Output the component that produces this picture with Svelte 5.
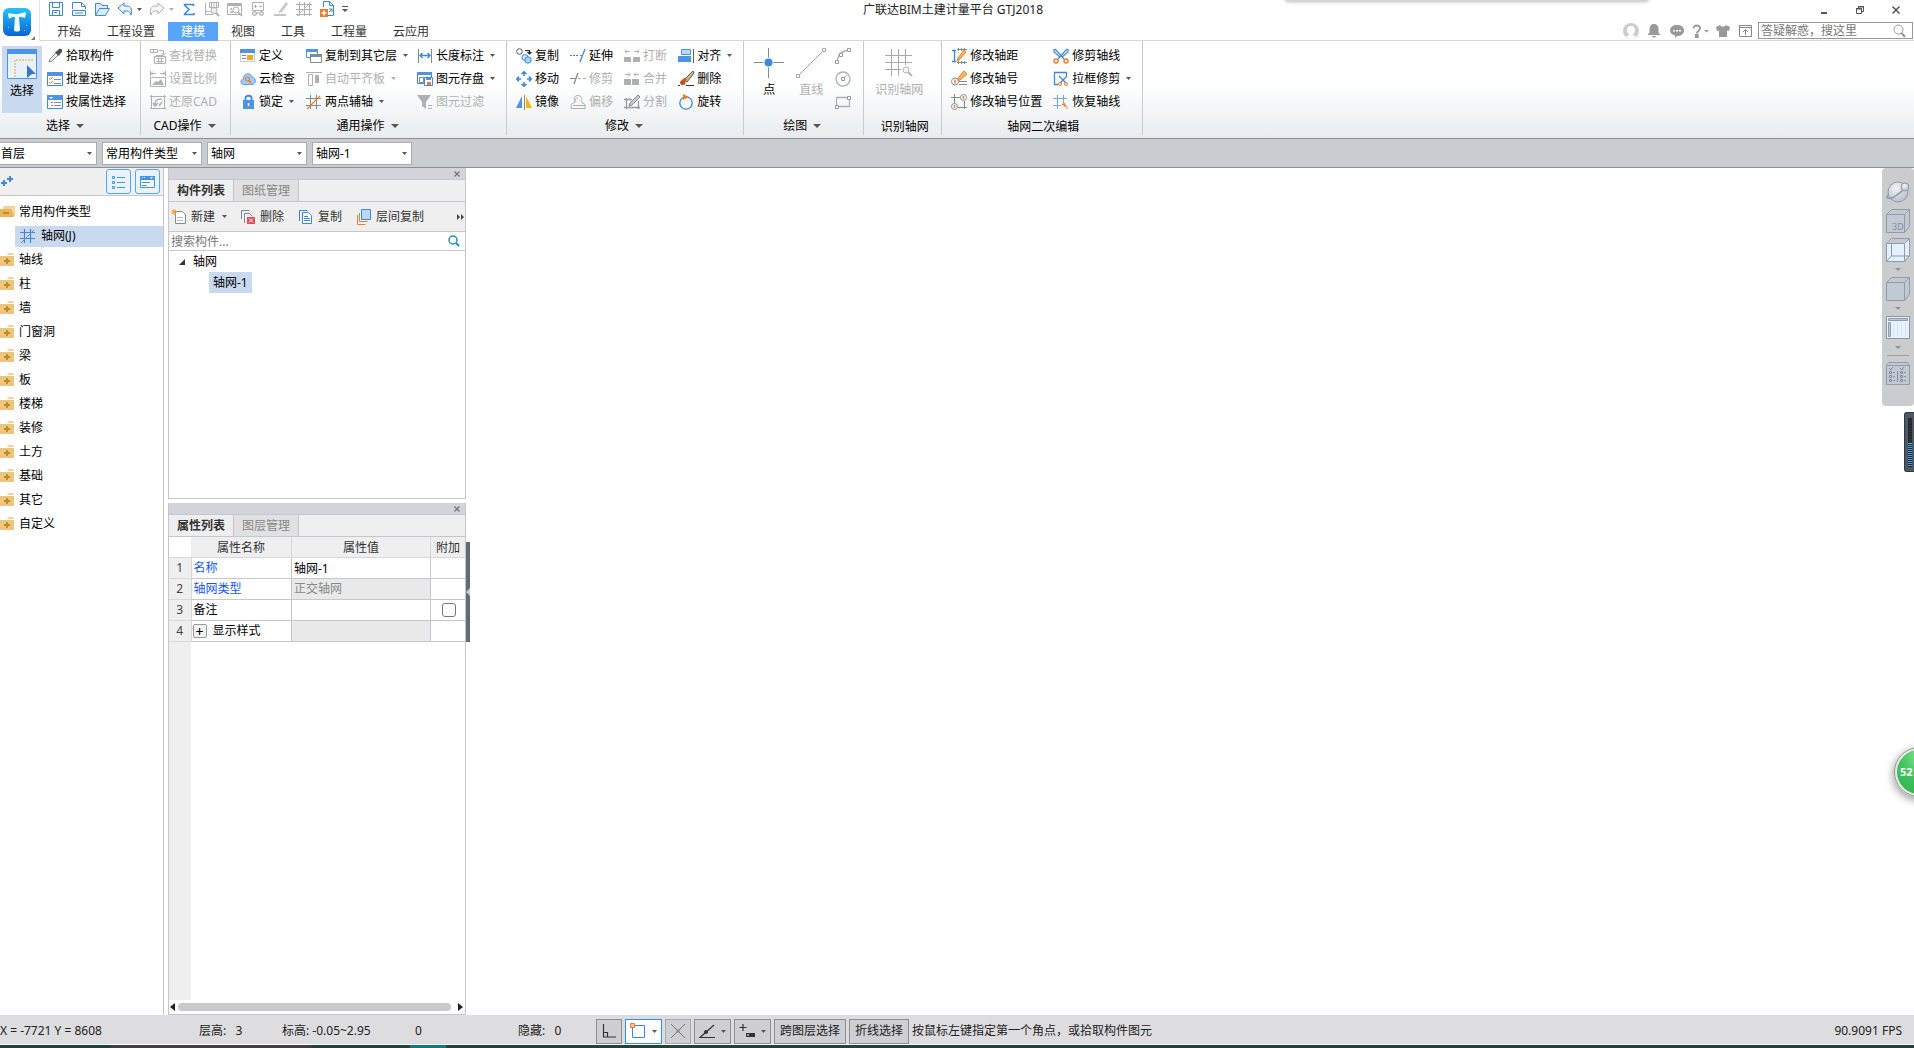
<script lang="ts">
  type Tool = { icon: string; label: string; off?: boolean; menu?: boolean };

  const B = "#3f87d9";
  const G = "#b0b0b0";
  const D = "#808c94";
  const O = "#ee7b2b";

  const icons: Record<string, string> = {
    // quick access
    save: `<path d="M1.5 1.5h13v13h-13zM4.5 1.5v5h7v-5M4.5 14.5v-5h7v5M6 11.5h3" fill="none" stroke="${B}"/>`,
    saveAs: `<path d="M1.5 8V1.5h9l4 4V8M10.5 1.5v4h4M1.5 9.5h13v5h-13zM4 12h8" fill="none" stroke="${B}"/>`,
    open: `<path d="M1.5 14V2.5h5l1.5 2h5.5v3M1.5 14.5l4-7h10l-4 7z" fill="#d9eafc" stroke="${B}"/>`,
    undo: `<path d="M1 7l6-5v3h3c4 0 5.5 4 4 9-1-3-2-4-4-4H7v3z" fill="#eaf3fd" stroke="${B}" stroke-linejoin="round"/>`,
    redo: `<path d="M15 7L9 2v3H6c-4 0-5.5 4-4 9 1-3 2-4 4-4h3v3z" fill="#f7f7f7" stroke="${G}" stroke-linejoin="round"/>`,
    sum: `<path d="M12.5 5V3.5h-9v.5L8 8.5 3.5 13v.5H13V12" fill="none" stroke="${B}" stroke-width="1.6"/>`,
    sheetFind: `<path d="M1.5 2v11.5h8M1.5 10.5h5M5.5 1.5h9v5h-9zM7.5 2v4M10 2v4M12.5 2v4" fill="none" stroke="${G}"/><circle cx="10" cy="9.5" r="3" fill="#eee" stroke="${G}"/><path d="M12 12l3 3" stroke="${G}" stroke-width="2"/>`,
    winFind: `<path d="M.5 2.5h14v11h-14z" fill="none" stroke="${G}"/><path d="M1 3h13v2H1z" fill="${G}"/><circle cx="9" cy="9" r="3" fill="#fff" stroke="${G}"/><path d="M11 11l4 4M3 8h2M3 11h3" stroke="${G}" stroke-width="1.5"/>`,
    sheetView: `<path d="M2.5 1.5h11v8h-11zM4 5.5h3M9 5.5h3M5.5 4v3" fill="none" stroke="${G}"/><circle cx="4.5" cy="12.5" r="2" fill="#ddd" stroke="${G}"/><circle cx="11.5" cy="12.5" r="2" fill="#ddd" stroke="${G}"/><path d="M6 12h4" stroke="${G}"/>`,
    pen: `<path d="M13 1L7 9l-2 3 4-1 6-8z" fill="#c8c8c8"/><path d="M1 14h12" stroke="${G}" stroke-width="1.5"/>`,
    net: `<path d="M3.5 1v14M8.5 1v14M13.5 1v14M0 3.5h16M0 8.5h16M0 13.5h16M1 15L14 2" fill="none" stroke="${G}"/>`,
    cad: `<path d="M4.5 6V.5h6l4 4v10H9M10.5.5v4h4" fill="none" stroke="${B}"/><path d="M1 8h8v8H1z" fill="${O}"/><path d="M5 9.5v5M2.5 12h5" stroke="#fff" stroke-width="1.5"/><path d="M10 11l3-3M13 11V8h-3" fill="none" stroke="${B}"/>`,
    // account row
    avatar: `<circle cx="8" cy="8" r="8" fill="#ccc"/><path d="M4 7a4 4 0 0 1 8 0c0 2-1 4-2 4v1c2 1 3 1 3 2a8 8 0 0 1-10 0c0-1 1-1 3-2v-1C5 11 4 9 4 7z" fill="#fff"/>`,
    bell: `<path d="M8 1c3 0 4.5 2 4.5 5v3.5l2 2.500h-13l2-2.500V6c0-3 1.500-5 4.500-5zM6 13h4c0 2-4 2-4 0z" fill="#999"/>`,
    chat: `<path d="M8 2c4 0 7 2 7 5.5S12 13 8 13l-2 2v-2.500C3 12 1 10 1 7.500 1 4 4 2 8 2z" fill="#999"/><path d="M4 7h2v1.5H4zM7 7h2v1.5H7zM10 7h2v1.5h-2z" fill="#fff"/>`,
    help: `<path d="M1.5 5.500c0-4 6.500-4 6.500 0 0 2-3.200 2.500-3.200 5M3.800 12h2v2h-2z" fill="none" stroke="#999" stroke-width="1.8"/><path d="M12 7h5l-2.500 2.500z" fill="#999"/>`,
    shirt: `<path d="M5 2c1 2 5 2 6 0l4 2-1 4-2-.5V14H4V7.500L2 8 1 4z" fill="#999"/>`,
    winUp: `<path d="M1.5 2.5h12v11h-12zM1.5 4.5h12M7.5 12V6.5M5 9l2.500-2.500L10 9" fill="none" stroke="#888"/>`,
    lens: `<circle cx="6.5" cy="6.5" r="4.5" fill="none" stroke="#999"/><path d="M9.5 10l3.500 4" stroke="#999" stroke-width="2"/>`,
    lensBlue: `<circle cx="7" cy="7" r="4" fill="none" stroke="#2a8bc4" stroke-width="1.5"/><path d="M10 10l3 3" stroke="#2a8bc4" stroke-width="2"/>`,
    // ribbon
    dropper: `<path d="M2 14l1-3 6-6 2 2-6 6z" fill="#eef4f8" stroke="#7b8790"/><path d="M8 4l2-1 2-2c2-1 4 1 3 3l-2 2-1 2z" fill="#455"/>`,
    batch: `<path d="M.5 2.5h15v12H.5z" fill="#fff" stroke="${B}"/><path d="M0 1h16v4H0z" fill="#4d94e2"/><path d="M2 7l1.500 1.500L6 6M2 11l1.500 1.500L6 10" fill="none" stroke="${O}"/><path d="M7 8.5h7M7 12.5h7" stroke="${D}"/>`,
    byProp: `<path d="M.5 2.5h15v12H.5z" fill="#fff" stroke="${B}"/><path d="M0 1h16v5H0z" fill="#4d94e2"/><path d="M2 3h4l-2 2z" fill="#fff"/><path d="M4 8.5h2M4 11.5h2M7 8.5h7M7 11.5h7" stroke="${D}"/>`,
    findRep: `<path d="M.5 1.5h7v3h-7zM3.5 1.5v3M9 2.5h4.5V6M11 5l2.500 2L16 5M4.5 8.5h11v7h-11zM6 7.5h7M6.5 10.5h7M6.5 13.5h7M8.5 10v5M11.5 10v5" fill="none" stroke="${G}"/>`,
    ratio: `<path d="M.5 5V0M15.5 5V0M1 2.5h5M10 2.5h5M3 .5l-2 2 2 2M13 .5l2 2-2 2M.5 6.5h15v9H.5z" fill="none" stroke="${G}"/><path d="M2 14l4-4 2 1 3-3 3 6z" fill="${G}"/>`,
    restore: `<path d="M1.5 1v14M14.5 1v14M0 2.5h16M0 14.5h16" stroke="${G}"/><path d="M5 12c0-5 1-7 7-7M3 9l2 3 3-3M9 12l3-4" fill="none" stroke="${G}" stroke-width="1.5"/>`,
    define: `<path d="M.5 2.5h14v11H.5z" fill="#fff" stroke="#c5ced6"/><path d="M0 1h15v4H0z" fill="#4d94e2"/><path d="M2 7.5h4M2 10.5h4" stroke="${D}"/><path d="M7 7h6v5H7z" fill="#f6a823"/>`,
    cloud: `<path d="M4 13.500c-4 0-4-5-.5-5.500C3 2 11 1 12 6c4 0 5 7 0 7.500z" fill="#a5cbf4" stroke="#5c9ee6"/><circle cx="7.5" cy="8" r="2" fill="none" stroke="${O}" stroke-width="1.2"/><path d="M9 9.5l2 2.500" stroke="${O}" stroke-width="1.5"/>`,
    lock: `<path d="M5.5 7V4c0-3 6-3 6 0v3" fill="none" stroke="${B}" stroke-width="1.8"/><path d="M3 6h11v9H3z" fill="#4d94e2"/><path d="M8.5 9v3" stroke="#fff" stroke-width="1.5"/>`,
    copyTo: `<path d="M.5 1.5h11v8H.5z" fill="#fff" stroke="#4d94e2"/><path d="M0 1h12v3H0z" fill="#4d94e2"/><path d="M4.5 6.5h11v8h-11z" fill="#fff" stroke="${D}"/><path d="M4 6h12v3H4z" fill="${D}"/>`,
    level: `<path d="M0 1.5h16M2.5 3.5h4v11h-4z" fill="none" stroke="${G}"/><path d="M9 4h4v8H9z" fill="${G}"/>`,
    aux: `<path d="M4.5 1v14M10.5 1v14M0 4.5h15M0 11.5h15" stroke="${D}"/><path d="M1 15L14 2" stroke="${O}" stroke-width="1.2"/>`,
    length: `<path d="M1.5 1v14M14.5 1v14" stroke="${D}"/><path d="M3 7.5h10M5.5 5L3 7.5 5.5 10M10.5 5L13 7.5 10.5 10" fill="none" stroke="${B}" stroke-width="1.4"/>`,
    store: `<path d="M.5 2.5h14v10H.5z" fill="#fff" stroke="${B}"/><path d="M0 1h15v3H0z" fill="#4d94e2"/><path d="M2.5 6.5h4v5h-4z" fill="none" stroke="${D}"/><path d="M7.5 6.5h8v8h-8z" fill="#fff" stroke="${B}"/><path d="M9 7h5v2H9z" fill="#4d94e2"/><path d="M10 11h4v3h-4z" fill="${O}"/>`,
    filter: `<path d="M0 1h14L9 8v7l-4-3V8z" fill="${G}"/><path d="M11 11.5h4M11 14.5h4" stroke="${G}"/>`,
    copy: `<circle cx="3.5" cy="3.5" r="2.8" fill="#fff" stroke="#555"/><path d="M9 2.5h4.5V5M11.5 4l2 2 2-2" fill="none" stroke="#222" stroke-width="1.2"/><circle cx="9" cy="9.5" r="3" fill="#d8ebfd" stroke="${B}"/><circle cx="12" cy="12" r="3.2" fill="#a8d4f8" stroke="${B}"/>`,
    extend: `<path d="M0 7.5h9" stroke="${B}" stroke-dasharray="2 1"/><path d="M15 1L10 14" stroke="${B}" stroke-width="1.3"/><path d="M10 7.5h3" stroke="${D}"/>`,
    brk: `<path d="M1 3.5h5M3 1.5l-2 2 2 2M10 3.5h5M13 1.5l2 2-2 2" fill="none" stroke="${G}"/><path d="M0 9h7v5H0zM9 9h7v5H9z" fill="${G}"/>`,
    align: `<path d="M3.5 1.5h9v5h-9z" fill="#b9d8f8" stroke="#4d94e2"/><path d="M0 8h13v6H0z" fill="#4d94e2"/><path d="M15.5 1v14" stroke="#666"/>`,
    move: `<path d="M8 1v4M8 11v4M1 8h4M11 8h4M5.5 3L8 .8 10.5 3M5.5 13L8 15.200 10.5 13M3 5.5L.8 8 3 10.5M13 5.5L15.200 8 13 10.5" fill="none" stroke="${B}" stroke-width="1.6"/>`,
    trim: `<path d="M0 7.5h6" stroke="#888"/><path d="M8 2L4 13" stroke="#888" stroke-width="1.3"/><path d="M8 7.5h8" stroke="${G}" stroke-dasharray="3 2"/>`,
    merge: `<path d="M1 3.5h5M4 1.5l2 2-2 2M10 3.5h5M12 1.5l-2 2 2 2" fill="none" stroke="${G}"/><path d="M0 8h7v6H0zM8 8h7v6H8z" fill="${G}"/>`,
    erase: `<path d="M15 0l1 2-7 9-3-2z" fill="#d9b98a" stroke="#555"/><path d="M9 8L5 14c-2 0-3-1-3-3l4-4z" fill="#b5651d"/><circle cx="5" cy="11.5" r="2.5" fill="#d44a1c"/><path d="M0 14.5h2M8 14.5h8" stroke="#333"/>`,
    mirror: `<path d="M6 2v12H0z" fill="#4d94e2"/><path d="M8.5 1v15" stroke="#888"/><path d="M10 2v12h6z" fill="#f9b41c"/>`,
    offset: `<path d="M1 14.5h14V11c0-2-4-2-4-3 2-3 0-6.500-3-6.500S3 4 5 8c0 1-4 1-4 3z" fill="none" stroke="${G}"/><path d="M3 11.5h12M6 8c-1-2-1-4 2-4" fill="none" stroke="${G}"/>`,
    split: `<path d="M0 5.5h8M2.5 4v11M0 13.5h16M14.5 7v8" stroke="#999" stroke-width="1.3"/><path d="M14 1l2 2-8 8-3 1 1-3z" fill="#ccc" stroke="#888"/>`,
    rotate: `<circle cx="8" cy="9" r="6.2" fill="none" stroke="${B}" stroke-width="1.3"/><path d="M5 0l6 3-6 3z" fill="${O}"/>`,
    arc: `<path d="M2 13C3 7 6 3 13 2" fill="none" stroke="${G}" stroke-width="1.3"/><path d="M.5 12.5h3v3h-3zM4.5 5.5h3v3h-3zM12.5.5h3v3h-3z" fill="#fff" stroke="#999"/>`,
    circle: `<circle cx="8" cy="8" r="7" fill="none" stroke="${G}" stroke-width="1.3"/><path d="M8 8l4-4" stroke="${G}"/><path d="M6.5 6.5h3v3h-3z" fill="#fff" stroke="#999"/>`,
    rect: `<path d="M1.5 3.5h13v9h-13z" fill="none" stroke="${G}" stroke-width="1.3"/><path d="M.5 11.5h3v3h-3zM12.5 2.5h3v3h-3z" fill="#fff" stroke="#999"/>`,
    axisGap: `<path d="M3.5 2v12M1 2.5h4M1 13.5h4" stroke="${B}" stroke-width="1.3"/><path d="M6 1.5h10M6 14.5h10M7.5 0v3M10.5 0v3M13.5 0v3M7.5 13v3M10.5 13v3M13.5 13v3" stroke="${D}"/><path d="M13 2l2 2-7 8-2 1 1-3z" fill="#f9b85a" stroke="${O}"/>`,
    axisNo: `<circle cx="4" cy="10.5" r="3.5" fill="#fff" stroke="${D}"/><path d="M4 8.5v4" stroke="${O}" stroke-width="1.5"/><path d="M8 10.5h8M8 13.5h8" stroke="${D}"/><path d="M13 0l3 3-7 6-2 .5.5-3z" fill="#f9b85a" stroke="${O}"/>`,
    axisPos: `<path d="M3.5 0v9M0 3.5h9M13.5 7v8M7 13.5h9" stroke="${D}"/><circle cx="12.5" cy="3.5" r="3" fill="#fff" stroke="${D}"/><circle cx="3.5" cy="12.5" r="3" fill="#fff" stroke="${D}"/><path d="M12.5 2v3M3.5 11v3" stroke="${O}" stroke-width="1.5"/>`,
    cutAxis: `<path d="M2 1l9 10M14 1L5 11M1 1v3l6 5M15 1v3L9 9" fill="none" stroke="${B}" stroke-width="1.2"/><circle cx="3" cy="13" r="2" fill="none" stroke="${O}" stroke-width="1.5"/><circle cx="13" cy="13" r="2" fill="none" stroke="${O}" stroke-width="1.5"/>`,
    cutBox: `<path d="M5 13.5H1.5v-12h12V5" fill="none" stroke="${B}" stroke-width="1.3"/><path d="M6 5l7 7M14 5l-7 7" stroke="${B}" stroke-width="1.3"/><circle cx="7" cy="13" r="1.5" fill="none" stroke="${O}"/><circle cx="13" cy="13" r="1.5" fill="none" stroke="${O}"/>`,
    backAxis: `<path d="M4.5 1v14M10.5 1v8M0 4.5h14M0 11.5h8" stroke="#7ba6d6"/><path d="M8 10l4-1 1 4z" fill="${O}"/><path d="M11 12c3-1 3 1 3 3" fill="none" stroke="${O}"/>`,
    // panels
    plus: `<path d="M10 2v6M7 5h6M4 6v6M1 9h6" stroke="${B}" stroke-width="2"/>`,
    list: `<path d="M1.5 2.5h2v2h-2zM1.5 7.5h2v2h-2zM1.5 12.5h2v2h-2zM6 3.5h8M6 8.5h8M6 13.5h8" fill="none" stroke="#3f96ea"/>`,
    card: `<path d="M.5 2.5h14v11H.5z" fill="#fff" stroke="#3f96ea"/><path d="M0 2h15v4H0z" fill="#3f96ea"/><path d="M2 3.5h4" stroke="#fff" stroke-dasharray="1 1"/><path d="M10 3h3l-1.500 2z" fill="#fff"/><path d="M2 8.5h8M2 11.5h5" stroke="#3f96ea"/>`,
    folderOpen: `<path d="M3 2h12v10h-2V5H3z" fill="#f2d49b"/><path d="M0 5h12l2 8H0z" fill="#e9b45c"/><path d="M3 9h6" stroke="#b97d1e" stroke-width="1.5"/>`,
    folder: `<path d="M8 1h5l1 2H7z" fill="#f2d49b"/><path d="M0 4h14v10H0z" fill="#edc57d"/><path d="M7 6v6M4 9h6" stroke="#c08527" stroke-width="1.8"/>`,
    axis: `<path d="M4.5 1v14M10.5 1v14M0 4.5h15M0 10.5h15" stroke="${B}" stroke-width="1.2"/><path d="M1 15L14 2" stroke="#888"/>`,
    create: `<path d="M4.5 2.5h7l3 3v9h-10z" fill="#fff" stroke="${D}"/><path d="M6 8.5h6M6 11.5h6" stroke="#bbb"/><path d="M1 1l4 4M5 1L1 5M3 0v6M0 3h6" stroke="#f59a23"/>`,
    remove: `<path d="M1.5 10V1.5h8M4.5 14V4.5h5l3 3" fill="none" stroke="${D}"/><path d="M7 8h8v7H7z" fill="#d9505a"/><path d="M9 9.5l4 4M13 9.5l-4 4" stroke="#fff"/>`,
    docs: `<path d="M1.5 12V1.5h8" fill="none" stroke="${B}"/><path d="M4.5 3.5h6l3 3v8h-9z" fill="#fff" stroke="${B}"/><path d="M6 7.5h4M6 9.5h6M6 11.5h6" stroke="${B}"/>`,
    layers: `<path d="M1.5 6v9.5h8M3.5 4v8.5h8" fill="none" stroke="${O}"/><path d="M5.5.5h9v10h-9z" fill="#b9d8fb" stroke="${B}"/>`,
    // status bar
    ortho: `<path d="M2.5 1v13H15M2.5 9.5h4v4" fill="none" stroke="#333" stroke-width="1.2"/>`,
    snapRect: `<path d="M2.5 2.5h12v12h-12z" fill="#fff" stroke="${B}"/><path d="M.5.5h4v4h-4z" fill="#f9c79a" stroke="${O}"/>`,
    snapX: `<path d="M1 1l14 14M15 1L1 15" stroke="#777"/><path d="M6.5 6.5h3v3h-3z" fill="#888"/>`,
    angle: `<path d="M15 2L1 14.5h15" fill="none" stroke="#333" stroke-width="1.2"/><circle cx="7" cy="9" r="2" fill="#333"/>`,
    dyn: `<path d="M4 1v7M.5 4.5h7" stroke="#333" stroke-width="1.2"/><path d="M7 10h9v4H7z" fill="#333"/><path d="M8 12h2" stroke="#fff"/>`,
  };

  const quick = ["save", "saveAs", "open", "undo", "redo", "sum", "sheetFind", "winFind", "sheetView", "pen", "net", "cad"];
  const tabs = ["开始", "工程设置", "建模", "视图", "工具", "工程量", "云应用"];
  let active = $state("建模");

  const pickTools: Tool[] = [
    { icon: "dropper", label: "拾取构件" },
    { icon: "batch", label: "批量选择" },
    { icon: "byProp", label: "按属性选择" },
  ];
  const cadTools: Tool[] = [
    { icon: "findRep", label: "查找替换", off: true },
    { icon: "ratio", label: "设置比例", off: true },
    { icon: "restore", label: "还原CAD", off: true },
  ];
  const commonTools: Tool[][] = [
    [
      { icon: "define", label: "定义" },
      { icon: "cloud", label: "云检查" },
      { icon: "lock", label: "锁定", menu: true },
    ],
    [
      { icon: "copyTo", label: "复制到其它层", menu: true },
      { icon: "level", label: "自动平齐板", off: true, menu: true },
      { icon: "aux", label: "两点辅轴", menu: true },
    ],
    [
      { icon: "length", label: "长度标注", menu: true },
      { icon: "store", label: "图元存盘", menu: true },
      { icon: "filter", label: "图元过滤", off: true },
    ],
  ];
  const editTools: Tool[][] = [
    [
      { icon: "copy", label: "复制" },
      { icon: "move", label: "移动" },
      { icon: "mirror", label: "镜像" },
    ],
    [
      { icon: "extend", label: "延伸" },
      { icon: "trim", label: "修剪", off: true },
      { icon: "offset", label: "偏移", off: true },
    ],
    [
      { icon: "brk", label: "打断", off: true },
      { icon: "merge", label: "合并", off: true },
      { icon: "split", label: "分割", off: true },
    ],
    [
      { icon: "align", label: "对齐", menu: true },
      { icon: "erase", label: "删除" },
      { icon: "rotate", label: "旋转" },
    ],
  ];
  const axisTools: Tool[][] = [
    [
      { icon: "axisGap", label: "修改轴距" },
      { icon: "axisNo", label: "修改轴号" },
      { icon: "axisPos", label: "修改轴号位置" },
    ],
    [
      { icon: "cutAxis", label: "修剪轴线" },
      { icon: "cutBox", label: "拉框修剪", menu: true },
      { icon: "backAxis", label: "恢复轴线" },
    ],
  ];

  const combos = [
    { name: "楼层", value: "首层" },
    { name: "构件分类", value: "常用构件类型" },
    { name: "构件类型", value: "轴网" },
    { name: "构件", value: "轴网-1" },
  ];
  const folders = ["轴线", "柱", "墙", "门窗洞", "梁", "板", "楼梯", "装修", "土方", "基础", "其它", "自定义"];
</script>

{#snippet icon(name: string)}
  <svg class="icon" width="16" height="16" viewBox="0 0 16 16" aria-hidden="true">{@html icons[name]}</svg>
{/snippet}

{#snippet caret()}
  <svg class="caret" width="5" height="3" viewBox="0 0 5 3" aria-hidden="true"><path d="M0 0h5L2.5 3z" fill="currentColor" /></svg>
{/snippet}

{#snippet column(tools: Tool[])}
  <div class="col">
    {#each tools as tool}
      <button class="tool" disabled={tool.off}>
        {@render icon(tool.icon)}<span>{tool.label}</span>
        {#if tool.menu}{@render caret()}{/if}
      </button>
    {/each}
  </div>
{/snippet}

{#snippet groupName(text: string)}
  <button class="group-name">
    {text}
    <svg width="8" height="4" viewBox="0 0 8 4" aria-hidden="true"><path d="M0 0h8L4 4z" fill="#555" /></svg>
  </button>
{/snippet}

{#snippet panelHead(first: string, second: string)}
  <div class="panel-bar"><button aria-label="关闭"><svg width="6" height="6" viewBox="0 0 6 6"><path d="M.5.5l5 5M5.5.5l-5 5" stroke="#777" stroke-width="1.3" /></svg></button></div>
  <div class="panel-tabs">
    <button class="on">{first}</button>
    <button>{second}</button>
  </div>
{/snippet}

<div class="app">
  <header>
    <button class="logo" aria-label="主菜单">
      <svg width="37" height="36" viewBox="0 0 37 36">
        <defs>
          <linearGradient id="logo" x1="0" y1="0" x2="0" y2="1">
            <stop offset="0" stop-color="#25c3fa" />
            <stop offset="1" stop-color="#0b62d4" />
          </linearGradient>
        </defs>
        <rect x="3" y="3" width="28" height="28" rx="6" fill="url(#logo)" />
        <path d="M8 9l1-1c5 2 11 1 16-1l1 1-1 5c-2-1-4-1-6-1l1 13c0 2-6 2-6 0l1-13c-2 0-4 0-6 2z" fill="#f2fbff" />
        <path d="M8 22l1 1M26 20l1 1M24 25l1 1" stroke="#8ee0ff" />
        <path d="M35 31v4h-4z" fill="#777" />
      </svg>
    </button>
    <div class="head-main">
      <div class="title-row">
        <div class="quick">
          {#each quick as name}
            <button aria-label={name}>{@render icon(name)}</button>
            {#if name === "undo"}<span class="mini">{@render caret()}</span>{/if}
            {#if name === "redo"}<span class="mini off">{@render caret()}</span>{/if}
          {/each}
          <button aria-label="自定义快速访问"><svg width="6" height="7" viewBox="0 0 6 7"><path d="M0 .5h6" stroke="#555" /><path d="M0 3h6L3 6z" fill="#555" /></svg></button>
        </div>
        <h1>广联达BIM土建计量平台 GTJ2018</h1>
        <div class="window">
          <button aria-label="最小化"><svg width="10" height="10" viewBox="0 0 10 10"><path d="M2 8h6" stroke="#555" stroke-width="2" /></svg></button>
          <button aria-label="还原"><svg width="10" height="10" viewBox="0 0 10 10"><path d="M3.5 3V1.5h5v5H7M1.5 3.5h5v5h-5z" fill="none" stroke="#555" /><path d="M3 1h6v1.5H3zM1 3h6v1.5H1z" fill="#555" /></svg></button>
          <button aria-label="关闭"><svg width="10" height="10" viewBox="0 0 10 10"><path d="M1.5 1.5l7 7M8.5 1.5l-7 7" stroke="#555" stroke-width="1.5" /></svg></button>
        </div>
      </div>
      <nav>
        {#each tabs as tab}
          <button class:active={tab === active} onclick={() => (active = tab)}>{tab}</button>
        {/each}
        <div class="account">
          {#each ["avatar", "bell", "chat", "help", "shirt", "winUp"] as name}
            <button aria-label={name}>{@render icon(name)}</button>
          {/each}
          <label class="search">
            <input aria-label="搜索帮助" placeholder="答疑解惑，搜这里" />
            {@render icon("lens")}
          </label>
        </div>
      </nav>
    </div>
  </header>

  <section class="ribbon">
    <div class="group first">
      <div class="tools">
        <button class="big selected">
          <svg width="30" height="30" viewBox="0 0 30 30" aria-hidden="true">
            <path d="M.5.5h29v29H.5z" fill="#e8f1fc" stroke="#4d94e2" />
            <path d="M0 0h30v5H0z" fill="#4d94e2" />
            <path d="M8 28V11h19" fill="none" stroke="#f5a623" stroke-dasharray="2 1" />
            <path d="M20 16l9 9h-4l-5 4z" fill="#3777c4" />
          </svg>
          选择
        </button>
        {@render column(pickTools)}
      </div>
      {@render groupName("选择")}
    </div>

    <div class="group">
      <div class="tools">{@render column(cadTools)}</div>
      {@render groupName("CAD操作")}
    </div>

    <div class="group">
      <div class="tools">
        {#each commonTools as tools}{@render column(tools)}{/each}
      </div>
      {@render groupName("通用操作")}
    </div>

    <div class="group">
      <div class="tools">
        {#each editTools as tools}{@render column(tools)}{/each}
      </div>
      {@render groupName("修改")}
    </div>

    <div class="group draw">
      <div class="tools">
        <button class="big">
          <svg width="30" height="30" viewBox="0 0 30 30" aria-hidden="true">
            <path d="M14.5 0v30M0 14.5h30" stroke="#7d8d92" />
            <circle cx="14.5" cy="14.5" r="5" fill="#fff" />
            <circle cx="14.5" cy="14.5" r="4" fill="#3f87d9" />
          </svg>
          点
        </button>
        <button class="big" disabled>
          <svg width="30" height="30" viewBox="0 0 30 30" aria-hidden="true">
            <path d="M2 28L28 2" stroke="#a8a8a8" />
            <path d="M.5 26.5h3v3h-3zM26.5.5h3v3h-3z" fill="#fff" stroke="#a8a8a8" />
          </svg>
          直线
        </button>
        <div class="col">
          <button class="tool" aria-label="弧" disabled>{@render icon("arc")}</button>
          <button class="tool" aria-label="圆" disabled>{@render icon("circle")}</button>
          <button class="tool" aria-label="矩形" disabled>{@render icon("rect")}</button>
        </div>
      </div>
      {@render groupName("绘图")}
    </div>

    <div class="group recognize">
      <div class="tools">
        <button class="big" disabled>
          <svg width="30" height="30" viewBox="0 0 30 30" aria-hidden="true">
            <path d="M7.5 1v27M14.5 1v27M21.5 1v16M1 7.5h27M1 14.5h27M1 21.5h16" stroke="#a8a8a8" />
            <circle cx="22" cy="22" r="3" fill="#f4f4f4" stroke="#b4b4b4" />
            <path d="M24 24l4 4" stroke="#b4b4b4" stroke-width="2" />
          </svg>
          识别轴网
        </button>
      </div>
      <div class="group-name plain">识别轴网</div>
    </div>

    <div class="group">
      <div class="tools">
        {#each axisTools as tools}{@render column(tools)}{/each}
      </div>
      <div class="group-name plain">轴网二次编辑</div>
    </div>
  </section>

  <div class="combos">
    {#each combos as combo}
      <label class="combo">
        <select aria-label={combo.name}><option>{combo.value}</option></select>
        {@render caret()}
      </label>
    {/each}
  </div>

  <main>
    <aside>
      <div class="aside-bar">
        {@render icon("plus")}
        <button aria-label="列表视图">{@render icon("list")}</button>
        <button aria-label="卡片视图">{@render icon("card")}</button>
      </div>
      <ul class="types">
        <li><button>{@render icon("folderOpen")}常用构件类型</button></li>
        <li><button class="current">{@render icon("axis")}轴网(J)</button></li>
        {#each folders as folder}
          <li><button>{@render icon("folder")}{folder}</button></li>
        {/each}
      </ul>
    </aside>

    <div class="panels">
      <section class="panel">
        {@render panelHead("构件列表", "图纸管理")}
        <div class="panel-tools">
          <button>{@render icon("create")}新建{@render caret()}</button>
          <button>{@render icon("remove")}删除</button>
          <button>{@render icon("docs")}复制</button>
          <button>{@render icon("layers")}层间复制</button>
          <button class="more" aria-label="更多"><svg width="7" height="6" viewBox="0 0 7 6"><path d="M0 0l3 3-3 3zM4 0l3 3-3 3z" fill="#444" /></svg></button>
        </div>
        <label class="find">
          <input aria-label="搜索构件" placeholder="搜索构件..." />
          {@render icon("lensBlue")}
        </label>
        <div class="tree">
          <div class="node"><svg width="6" height="6" viewBox="0 0 6 6"><path d="M6 0v6H0z" fill="#333" /></svg>轴网</div>
          <button class="leaf">轴网-1</button>
        </div>
      </section>

      <section class="panel">
        {@render panelHead("属性列表", "图层管理")}
        <div class="grid-area">
          <table>
            <thead>
              <tr><th class="num"></th><th class="name">属性名称</th><th>属性值</th><th class="extra">附加</th></tr>
            </thead>
            <tbody>
              <tr><td class="num">1</td><td class="link">名称</td><td><input aria-label="名称" value="轴网-1" /></td><td></td></tr>
              <tr><td class="num">2</td><td class="link">轴网类型</td><td class="fixed">正交轴网</td><td></td></tr>
              <tr><td class="num">3</td><td>备注</td><td><input aria-label="备注" /></td><td class="check"><input type="checkbox" aria-label="附加备注" /></td></tr>
              <tr><td class="num">4</td><td><div class="expand"><button aria-label="展开">+</button>显示样式</div></td><td class="fixed"></td><td></td></tr>
            </tbody>
          </table>
        </div>
        <div class="scroll">
          <svg width="5" height="8" viewBox="0 0 5 8"><path d="M5 0v8L0 4z" fill="#222" /></svg>
          <div class="thumb"></div>
          <svg width="5" height="8" viewBox="0 0 5 8"><path d="M0 0v8l5-4z" fill="#222" /></svg>
        </div>
        <button class="handle" aria-label="收起"><svg width="4" height="8" viewBox="0 0 4 8"><path d="M4 0v8L0 4z" fill="#c5ccd2" /></svg></button>
      </section>
    </div>

    <section class="canvas">
      <div class="palette">
        <button aria-label="动态观察">
          <svg width="24" height="24" viewBox="0 0 24 24">
            <defs>
              <radialGradient id="ball" cx=".4" cy=".3" r=".7">
                <stop offset="0" stop-color="#f2f5f9" />
                <stop offset="1" stop-color="#b6c0cd" />
              </radialGradient>
            </defs>
            <circle cx="12" cy="12" r="10" fill="url(#ball)" stroke="#929ba6" />
            <path d="M2 15c-3 4 2 4 6 2C14 13 19 9 21 6" fill="none" stroke="#929ba6" stroke-width="1.5" />
            <circle cx="19" cy="7" r="4" fill="url(#ball)" stroke="#929ba6" />
          </svg>
        </button>
        <button aria-label="三维">
          <svg width="24" height="24" viewBox="0 0 24 24">
            <path d="M.5 5.5l5-5h18v17l-5 6H.5z" fill="#c0c9d4" stroke="#929ba6" />
            <path d="M.5 5.5h18v18M18.5 5.5l5-5" fill="none" stroke="#929ba6" />
            <text x="6" y="21" font-size="9" fill="#858f9b">3D</text>
          </svg>
        </button>
        <button aria-label="俯视">
          <svg width="24" height="24" viewBox="0 0 24 24">
            <path d="M.5 5.5l5-5h18v17l-5 6H.5z" fill="#e3f0fe" stroke="#929ba6" />
            <path d="M1 5l5-4h17l-5 4z" fill="#c0c9d4" />
            <path d="M.5 5.5h18v18M18.5 5.5l5-5M5.5 6v12M.5 23.5l5-5.5h18" fill="none" stroke="#929ba6" />
          </svg>
          <svg class="down" width="6" height="3" viewBox="0 0 6 3"><path d="M0 0h6L3 3z" fill="#8a929b" /></svg>
        </button>
        <button aria-label="实体显示">
          <svg width="24" height="24" viewBox="0 0 24 24">
            <path d="M.5 5.5l5-5h18v17l-5 6H.5z" fill="#c0c9d4" stroke="#929ba6" />
            <path d="M.5 5.5h18v18M18.5 5.5l5-5" fill="none" stroke="#929ba6" />
          </svg>
          <svg class="down" width="6" height="3" viewBox="0 0 6 3"><path d="M0 0h6L3 3z" fill="#8a929b" /></svg>
        </button>
        <button aria-label="视图布局">
          <svg width="24" height="24" viewBox="0 0 24 24">
            <path d="M.5.5h23v22H.5z" fill="#e6f2ff" stroke="#8d969f" />
            <path d="M2.5 2.5h19v2h-19zM2.5 6.5h2v14h-2z" fill="#bfc7d0" stroke="#929ba6" />
            <path d="M7.5 7v13M11.5 7v13M15.5 7v13M19.5 7v13" stroke="#d6e6f7" />
          </svg>
          <svg class="down" width="6" height="3" viewBox="0 0 6 3"><path d="M0 0h6L3 3z" fill="#8a929b" /></svg>
        </button>
        <hr />
        <button aria-label="显示设置">
          <svg width="24" height="24" viewBox="0 0 24 24">
            <path d="M.5 3.5l2-3h19l2 3v19H.5zM.5 3.5h23" fill="#c0c9d4" stroke="#929ba6" />
            <path d="M3 6l2 2 2-3M14 6l2 2 2-3M3.5 9.5h2v2h-2zM3.5 13.5h2v2h-2zM3.5 17.5h2v2h-2zM14.5 9.5h2v2h-2zM14.5 13.5h2v2h-2zM14.5 17.5h2v2h-2zM7 10.5h2M7 14.5h2M7 18.5h2M18 10.5h2M18 14.5h2M18 18.5h2M11.5 9v11" fill="none" stroke="#858f9b" />
          </svg>
        </button>
      </div>
      <div class="meter"><i></i></div>
      <div class="badge">52</div>
    </section>
  </main>

  <footer>
    <span class="coords">X = -7721 Y = 8608</span>
    <span class="height">层高:&nbsp;&nbsp; 3</span>
    <span class="level">标高: -0.05~2.95</span>
    <span class="zero">0</span>
    <span class="hidden-count">隐藏:&nbsp;&nbsp; 0</span>
    <button aria-label="正交">{@render icon("ortho")}</button>
    <button class="on" aria-label="矩形捕捉">{@render icon("snapRect")}{@render caret()}</button>
    <button class="dim" aria-label="交点">{@render icon("snapX")}</button>
    <button aria-label="角度">{@render icon("angle")}{@render caret()}</button>
    <button aria-label="动态输入">{@render icon("dyn")}{@render caret()}</button>
    <button class="text">跨图层选择</button>
    <button class="text">折线选择</button>
    <span>按鼠标左键指定第一个角点，或拾取构件图元</span>
    <span class="fps">90.9091 FPS</span>
  </footer>
  <div class="desktop"><i class="wide"></i><i class="teal"></i></div>
  <div class="edge"></div>
</div>

<style>
  :global(body) {
    margin: 0;
  }

  .app {
    display: flex;
    flex-direction: column;
    min-height: 100vh;
    position: relative;
    overflow: hidden;
    font: 12px/16px "Noto Sans", "Noto Sans CJK SC", sans-serif;
    color: #000;
    background: #fff;
  }

  button,
  input,
  select {
    font: inherit;
    color: inherit;
    border: 0;
    padding: 0;
    margin: 0;
    background: none;
    border-radius: 0;
    white-space: nowrap;
  }

  input {
    outline: none;
    min-width: 0;
  }

  input::placeholder {
    color: #777;
    opacity: 1;
  }

  svg {
    flex: none;
    display: block;
    overflow: visible;
  }

  .caret {
    color: #555;
  }

  /* header */
  header {
    display: flex;
  }

  .logo {
    width: 40px;
    box-sizing: border-box;
    padding-top: 4px;
    border-right: 1px solid #e4e4e4;
  }

  .head-main {
    flex: 1;
  }

  .title-row {
    display: grid;
    grid-template-columns: 1fr auto 1fr;
    height: 22px;
    align-items: center;
  }

  .quick {
    display: flex;
    align-items: center;
    gap: 7px;
    padding-left: 8px;
    padding-bottom: 4px;
  }

  .mini {
    margin-left: -3px;
  }

  .off .caret {
    color: #b0b0b0;
  }

  h1 {
    font: inherit;
    margin: 0 48px 2px 0;
    color: #222;
  }

  .window {
    display: flex;
    justify-content: flex-end;
    padding-bottom: 2px;
  }

  .window button {
    width: 36px;
    display: flex;
    justify-content: center;
  }

  nav {
    display: flex;
    height: 19px;
    box-sizing: border-box;
    padding-left: 4px;
    border-bottom: 1px solid #d8d8d8;
  }

  nav > button {
    padding: 0 13px;
    height: 19px;
    color: #333;
  }

  nav > button.active {
    background: #58a4f8;
    color: #fff;
  }

  .account {
    display: flex;
    gap: 7px;
    margin-left: auto;
    padding-right: 1px;
  }

  .search {
    display: flex;
    align-items: center;
    justify-content: space-between;
    box-sizing: border-box;
    width: 155px;
    height: 17px;
    margin-left: -3px;
    padding: 0 4px 0 2px;
    border: 1px solid #999;
  }

  .search input {
    width: 120px;
    height: 15px;
  }

  /* ribbon */
  .ribbon {
    display: flex;
    height: 97px;
    background: linear-gradient(#fff 45%, #e8ecee);
    border-bottom: 1px solid #8d9094;
  }

  .group {
    display: flex;
    flex-direction: column;
    padding: 3px 11px 0 9px;
    margin-bottom: 3px;
    border-right: 1px solid #c9cccf;
  }

  .group.first {
    padding: 3px 12px 0 2px;
  }

  .group.draw {
    padding: 3px 10px 0 7px;
  }

  .group.recognize {
    padding: 3px 16px 0 11px;
  }

  .tools {
    display: flex;
    gap: 11px;
    height: 69px;
    padding-right: 2px;
  }

  .first .tools {
    gap: 5px;
  }

  .draw .tools {
    gap: 6px;
  }

  .col {
    display: flex;
    flex-direction: column;
    align-items: flex-start;
  }

  .tool {
    display: flex;
    align-items: center;
    height: 23px;
    gap: 3px;
  }

  .tool .caret {
    margin: 0 -2px 0 3px;
  }

  button:disabled,
  button:disabled .caret {
    color: #b0b0b0;
  }

  .big {
    display: flex;
    flex-direction: column;
    align-items: center;
    gap: 4px;
    min-width: 36px;
    padding: 4px 0;
  }

  .big.selected {
    width: 40px;
    padding: 3px 0;
    margin-top: 2px;
    background: #c9d9f0;
  }

  .group-name {
    display: flex;
    align-items: center;
    justify-content: center;
    gap: 6px;
    height: 22px;
    padding-top: 3px;
  }

  .group-name.plain {
    height: 16px;
    padding: 6px 0 0 4px;
  }

  .recognize .group-name {
    margin: 0 -14px 0 -9px;
  }

  /* combo bar */
  .combos {
    display: flex;
    gap: 5px;
    height: 29px;
    box-sizing: border-box;
    padding-top: 3px;
    background: #c9ccd1;
    border-bottom: 1px solid #8d9094;
  }

  .combo {
    display: grid;
    width: 100px;
    height: 23px;
    box-sizing: border-box;
    border: 1px solid #a9abae;
    background: #fff;
    align-items: center;
  }

  .combo:first-child {
    width: 97px;
    border-left: 0;
  }

  .combo > :global(*) {
    grid-area: 1 / 1;
  }

  .combo select {
    appearance: none;
    width: 100%;
    height: 21px;
    padding-left: 3px;
  }

  .combo:first-child select {
    padding-left: 1px;
  }

  .combo .caret {
    justify-self: end;
    margin-right: 4px;
    pointer-events: none;
  }

  /* left tree */
  main {
    flex: 1;
    display: flex;
  }

  aside {
    width: 163px;
    border-right: 1px solid #c6c6ce;
  }

  .aside-bar {
    display: flex;
    align-items: center;
    gap: 4px;
    height: 27px;
    background: #f0f0f0;
    border-bottom: 1px solid #c6c6ce;
    padding-right: 3px;
  }

  .aside-bar > :global(.icon) {
    margin-right: auto;
  }

  .aside-bar button {
    display: flex;
    align-items: center;
    justify-content: center;
    width: 25px;
    height: 25px;
    box-sizing: border-box;
    border: 1px solid #58a4f0;
    border-radius: 3px;
    background: #e8f3fe;
  }

  .types {
    list-style: none;
    margin: 4px 0 0;
    padding: 0;
  }

  .types li {
    height: 24px;
    display: flex;
    align-items: center;
  }

  .types button {
    display: flex;
    align-items: center;
    gap: 3px;
    height: 21px;
    flex: 1;
  }

  .types .current {
    margin-left: 15px;
    padding-left: 5px;
    gap: 5px;
    background: #c9d9f0;
  }

  /* middle panels */
  .panels {
    display: grid;
    grid-template-rows: 331px 1fr;
    gap: 4px;
    width: 298px;
    margin-left: 4px;
  }

  .panel {
    display: flex;
    flex-direction: column;
    position: relative;
    border: 1px solid #c6c6ce;
    border-top-width: 0;
  }

  .panel-bar {
    display: flex;
    align-items: center;
    justify-content: flex-end;
    height: 11px;
    padding-right: 5px;
    background: #d3d4d9;
    border-bottom: 1px solid #c6c6ce;
  }

  .panel-tabs {
    display: flex;
    height: 21px;
    background: #efefef;
    border-bottom: 1px solid #c6c6ce;
  }

  .panel-tabs button {
    width: 65px;
    color: #888;
    background: #e1e1e1;
    border-right: 1px solid #c6c6ce;
  }

  .panel-tabs .on {
    color: #333;
    font-weight: 700;
    background: #efefef;
  }

  .panel-tools {
    display: flex;
    align-items: center;
    gap: 14px;
    height: 29px;
    padding-left: 2px;
    background: #efefef;
    border-bottom: 1px solid #c6c6ce;
    color: #333;
  }

  .panel-tools button {
    display: flex;
    align-items: center;
    gap: 4px;
  }

  .panel-tools .caret {
    margin-left: 3px;
    margin-right: -1px;
  }

  .panel-tools .more {
    margin-left: auto;
    margin-right: 1px;
  }

  .find {
    display: flex;
    height: 18px;
    align-items: center;
    padding: 0 3px 0 2px;
    border-bottom: 1px solid #c6c6ce;
  }

  .find input {
    flex: 1;
    height: 18px;
  }

  .tree .node {
    display: flex;
    align-items: center;
    gap: 8px;
    height: 21px;
    padding-left: 10px;
  }

  .tree .leaf {
    height: 21px;
    margin-left: 40px;
    padding: 0 4px;
    background: #c9d9f0;
  }

  .grid-area {
    flex: 1;
    background: linear-gradient(90deg, #efefef 22px, #fff 22px);
  }

  table {
    width: 100%;
    table-layout: fixed;
    border-collapse: collapse;
  }

  th {
    height: 18px;
    padding: 2px 0 0;
    font-weight: 400;
    color: #333;
    background: #efefef;
    border-right: 1px solid #d8d8dc;
    border-bottom: 1px solid #d8d8dc;
  }

  th.num {
    width: 22px;
    background: #fff;
    border-right: 0;
  }

  .name {
    width: 100px;
  }

  .extra {
    width: 34px;
    border-right: 0;
  }

  td {
    height: 20px;
    padding: 0 0 0 2px;
    border: 1px solid #c6c6ce;
    border-width: 0 1px 1px 0;
    background: #fff;
  }

  td:last-child {
    border-right: 0;
  }

  td.num {
    padding: 0;
    text-align: center;
    color: #444;
    background: #efefef;
    border-color: #d8d8dc;
  }

  td input {
    display: block;
    width: 100%;
    height: 20px;
  }

  .link {
    color: #1656f0;
  }

  td.fixed {
    color: #888;
    background: #e9e9e9;
  }

  .check input {
    appearance: none;
    width: 14px;
    height: 14px;
    box-sizing: border-box;
    margin-left: 9px;
    border: 1px solid #777;
    border-radius: 3px;
  }

  .expand {
    display: flex;
    align-items: center;
    gap: 6px;
    margin-left: -1px;
  }

  .expand button {
    width: 14px;
    height: 14px;
    box-sizing: border-box;
    border: 1px solid #999;
    border-radius: 2px;
    background: #f2f2f2;
    font-size: 14px;
    line-height: 11px;
  }

  .scroll {
    display: flex;
    align-items: center;
    height: 14px;
    gap: 3px;
    padding: 0 2px 0 1px;
  }

  .thumb {
    flex: 1;
    height: 8px;
    margin-right: 4px;
    border-radius: 4px;
    background: #cacaca;
  }

  .handle {
    position: absolute;
    left: 297px;
    top: 39px;
    width: 4px;
    height: 100px;
    background: #5f6d77;
  }

  /* drawing area */
  .canvas {
    flex: 1;
    position: relative;
  }

  .palette {
    position: absolute;
    right: 0;
    top: 0;
    display: flex;
    flex-direction: column;
    align-items: center;
    gap: 5px;
    width: 32px;
    height: 238px;
    box-sizing: border-box;
    padding-top: 12px;
    border-radius: 4px;
    background: #cbcccd;
  }

  .palette .down {
    margin: 6px auto 1px;
  }

  .palette hr {
    width: 22px;
    margin: 0 0 1px;
    border: 0;
    border-top: 1px solid #989da3;
  }

  .meter {
    position: absolute;
    right: 0;
    top: 244px;
    width: 10px;
    height: 60px;
    box-sizing: border-box;
    padding: 5px 3px 4px;
    border: 1px solid #333a42;
    border-right: 0;
    border-radius: 3px 0 0 3px;
    background: #4d5864;
  }

  .meter i {
    display: block;
    width: 4px;
    height: 49px;
    background:
      repeating-linear-gradient(#22262b 0 1px, transparent 1px 2px),
      linear-gradient(#333 50%, #7fd89a 50%, #35a8e8 56%);
  }

  .badge {
    position: absolute;
    right: -30px;
    top: 579px;
    width: 50px;
    height: 50px;
    box-sizing: border-box;
    padding-left: 3px;
    border: 3px solid #e8ebe9;
    border-radius: 50%;
    outline: 1px solid #8d9690;
    outline-offset: -1px;
    background: radial-gradient(circle at 60% 10%, #8fe79b, #3fc45c 50%, #2eb14c);
    box-shadow: -1px 3px 8px #0006;
    color: #fff;
    font-size: 11px;
    font-weight: 700;
    line-height: 44px;
  }

  /* status bar */
  footer {
    display: flex;
    align-items: center;
    gap: 3px;
    height: 29px;
    box-sizing: border-box;
    padding-top: 3px;
    background: #dddddf;
    color: #222;
  }

  footer button {
    display: flex;
    align-items: center;
    gap: 6px;
    height: 25px;
    box-sizing: border-box;
    padding: 0 4px;
    border: 1px solid #8e8e92;
    background: #cfcfd3;
  }

  footer button.on {
    border: 1px solid #2492ff;
    background: #fff;
  }

  footer button.dim {
    border-color: #aaa;
  }

  footer button.text {
    padding: 0 5px;
  }

  .coords {
    width: 196px;
  }

  .height {
    width: 80px;
  }

  .level {
    width: 130px;
  }

  .zero {
    width: 100px;
  }

  .hidden-count {
    width: 75px;
  }

  .fps {
    margin-left: auto;
    margin-right: 12px;
  }

  .desktop {
    display: flex;
    height: 3px;
    border-top: 1px solid #fff;
    background: #234239;
  }

  .wide {
    width: 200px;
    margin-left: 111px;
    background: #443f42;
  }

  .teal {
    width: 36px;
    margin-left: 99px;
    background: #12787c;
  }

  .edge {
    position: absolute;
    right: 266px;
    top: -4px;
    width: 362px;
    height: 5px;
    background: #d4d4d4;
    box-shadow: 0 0 4px #999;
  }
</style>
